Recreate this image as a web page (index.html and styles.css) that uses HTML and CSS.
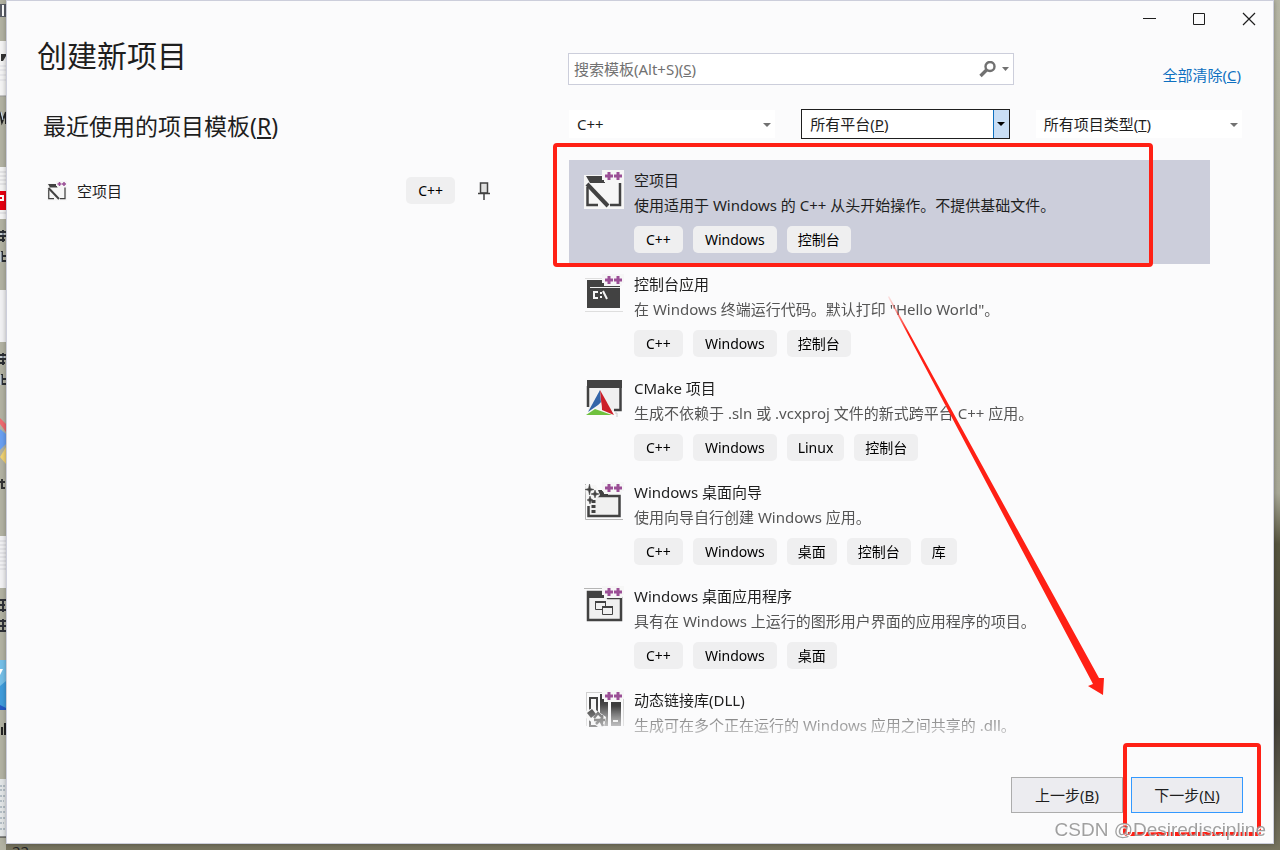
FILE: index.html
```html
<!DOCTYPE html>
<html lang="zh-CN">
<head>
<meta charset="utf-8">
<meta name="viewport" content="width=device-width, initial-scale=1">
<title>创建新项目</title>
<link rel="stylesheet" href="styles.css">
</head>
<body class="desktop">
<svg class="desktop-left" width="6" height="850" aria-hidden="true">
  <rect width="6" height="850" fill="#b2b2a2"/>
  <rect y="4" width="6" height="13" fill="#5a5d66"/><rect x="2" y="5" width="2" height="11" fill="#fff"/>
  <rect y="41" width="6" height="55" fill="#f4f4f4"/><path d="M1 61V54H6V56L3 61Z" fill="#333"/><path d="M0 66H6M0 70H6M0 75H6M0 80H6" stroke="#dcdce2"/>
  <path d="M0 96H6" stroke="#999"/>
  <path d="M0 112L2 122L6 112M6 124V112" stroke="#222" stroke-width="2" fill="none"/><path d="M1 112L3 120" stroke="#cfe6ff"/>
  <rect y="167" width="6" height="52" fill="#f4f4f4"/><path d="M0 172H6M0 176H6M0 180H6M0 184H6M0 213H6" stroke="#d4d4d8"/>
  <rect y="191" width="6" height="19" fill="#e60012"/><path d="M0 196H3V200H0" stroke="#fff" stroke-width="2" fill="none"/>
  <g id="caption" stroke="#2c2f33" stroke-width="2" fill="none"><path d="M0 232H6M0 236H6M0 240H5M3 230V242M2 251V262M6 256H3M6 261H3"/><path d="M0 234H5M1 252V262" stroke="#d9e9ff" stroke-width="1"/></g>
  <rect y="290" width="6" height="52" fill="#f1f1f3"/>
  <use href="#caption" y="123"/>
  <path d="M0 418L6 424V432L0 424Z" fill="#ef6a70"/><path d="M0 429L6 434V444L0 450Z" fill="#6a9ff0"/><path d="M0 457L6 447V464Z" fill="#f0d273"/>
  <path d="M2 479V488H5M0 482H5" stroke="#333" stroke-width="2" fill="none"/>
  <rect y="536" width="6" height="52" fill="#f1f1f3"/><path d="M0 541H6M0 545H6M0 549H6M0 553H6M0 557H6M0 561H6M0 565H6M0 569H6" stroke="#d5d5da"/>
  <path d="M0 600H6M0 605H5M0 610H6M0 621H6M0 626H6M0 631H6M3 600V612M3 619V631" stroke="#303238" stroke-width="2"/>
  <rect y="660" width="6" height="50" fill="#3f9bdb"/><path d="M0 660H6V681L0 686Z" fill="#75bfe8"/><path d="M0 669H3L0 675Z" fill="#fff"/><path d="M0 705L6 708V710H0Z" fill="#2459c3"/>
  <path d="M2 727V735M5 723V735" stroke="#222" stroke-width="2"/>
  <rect y="779" width="6" height="58" fill="#e3e6e7"/><path d="M0 786H6M0 790H5M0 796H6M0 801H4M0 807H6M0 812H5M0 818H6M0 823H4M0 829H6" stroke="#8596a3" stroke-dasharray="2 1"/><path d="M0 837H6" stroke="#333"/>
</svg>
<main class="window">
  <section class="recent">
    <h1 class="title">创建新项目</h1>
    <h2 class="subtitle">最近使用的项目模板(<u>R</u>)</h2>
    <div class="recent-item">
      <svg class="recent-icon" viewBox="0 0 40 40" aria-hidden="true"><use href="#icon-empty"/></svg>
      <span class="recent-name">空项目</span>
      <span class="tag latin">C++</span>
      <button class="pin" type="button" aria-label="固定"><svg width="12" height="18" viewBox="0 0 12 18"><path d="M2.5 1H9.5V11H2.5Z" fill="#e0e0e0" stroke="#424242" stroke-width="1.5"/><path d="M0 11.5H12M6 12V18" stroke="#424242" stroke-width="1.5"/></svg></button>
    </div>
  </section>

  <section class="browse">
    <div class="controls">
      <button class="control" type="button" aria-label="最小化"><svg width="14" height="14"><path d="M1 6.5H14" stroke="#1e1e1e"/></svg></button>
      <button class="control" type="button" aria-label="最大化"><svg width="14" height="14"><path d="M1.5 1.5H12.5V12.5H1.5Z" fill="none" stroke="#1e1e1e"/></svg></button>
      <button class="control" type="button" aria-label="关闭"><svg width="14" height="14"><path d="M1 1L13 13M13 1L1 13" stroke="#1e1e1e" stroke-width="1.2"/></svg></button>
    </div>

    <div class="search-row">
      <div class="search">
        <input class="search-input" id="search" type="text">
        <label class="hint" for="search">搜索模板(Alt+S)(<u>S</u>)</label>
        <button class="search-button" type="button" aria-label="搜索"><svg width="32" height="18" viewBox="0 0 32 18"><circle cx="12" cy="5.500" r="4.500" fill="none" stroke="#717171" stroke-width="2.400"/><path d="M9 8.500L2.500 15" stroke="#717171" stroke-width="3.400"/><path d="M24 6H31L27.500 10Z" fill="#717171"/></svg></button>
      </div>
      <a class="clear" href="#">全部清除(<u>C</u>)</a>
    </div>

    <div class="filters">
      <div class="filter">
        <select class="select" aria-label="语言"><option>C++</option></select>
        <svg class="arrow" width="8" height="4" aria-hidden="true"><path d="M0 0H8L4 4Z"/></svg>
      </div>
      <div class="filter filter-active">
        <select class="select" id="platform"><option></option></select>
        <label class="hint hint-filter" for="platform">所有平台(<u>P</u>)</label>
        <span class="drop"><svg width="8" height="4" aria-hidden="true"><path d="M0 0H8L4 4Z"/></svg></span>
      </div>
      <div class="filter">
        <select class="select" id="type"><option></option></select>
        <label class="hint hint-filter" for="type">所有项目类型(<u>T</u>)</label>
        <svg class="arrow" width="8" height="4" aria-hidden="true"><path d="M0 0H8L4 4Z"/></svg>
      </div>
    </div>

    <div class="results">
      <ul class="templates">
        <li class="template selected">
          <svg class="icon" viewBox="0 0 40 40" aria-hidden="true">
            <g id="icon-empty">
              <path d="M0 5H18V0H40V39H0Z" fill="#f6f6f6"/>
              <path d="M2 6H18V10H21V13H6Z" fill="#424242"/>
              <path d="M3.500 17V35H14M26 35H36V13" fill="none" stroke="#424242" stroke-width="2.500"/>
              <path d="M3 14L24 36" stroke="#424242" stroke-width="4"/>
              <g id="plus-plus"><path d="M18 0H40V9H38V12H20V9H18Z" fill="#f6f6f6"/><path d="M21 6H29M25 2V10M30 6H38M34 2V10" stroke="#9b4f96" stroke-width="3"/></g>
            </g>
          </svg>
          <div class="details">
            <h3 class="name">空项目</h3>
            <p class="description">使用适用于 Windows 的 C++ 从头开始操作。不提供基础文件。</p>
            <div class="tags"><span class="tag latin">C++</span><span class="tag latin">Windows</span><span class="tag">控制台</span></div>
          </div>
        </li>
        <li class="template">
          <svg class="icon" viewBox="0 0 40 40" aria-hidden="true">
            <path d="M1 4.500H18M1 37.500H39M39.500 4V7" stroke="#dedede"/>
            <path d="M3 6H36V34H3Z" fill="#424242"/><path d="M6 13.500H36" stroke="#f0f0f0"/>
            <path d="M14 18H10V24H14M17 18V20M17 22V24M19 17L23 25" fill="none" stroke="#f4f4f4" stroke-width="2"/>
            <use href="#plus-plus"/>
          </svg>
          <div class="details">
            <h3 class="name">控制台应用</h3>
            <p class="description">在 Windows 终端运行代码。默认打印 "Hello World"。</p>
            <div class="tags"><span class="tag latin">C++</span><span class="tag latin">Windows</span><span class="tag">控制台</span></div>
          </div>
        </li>
        <li class="template">
          <svg class="icon" viewBox="0 0 40 40" aria-hidden="true">
            <path d="M4 3H37V33H4Z" fill="#f0f0f0"/><path d="M3 2H38V10H3Z" fill="#424242"/>
            <path d="M4 8V29M36.500 8V32H30" fill="none" stroke="#424242" stroke-width="2.500"/>
            <path d="M15 12L3 37H30Z" fill="#f7f7f7"/>
            <path d="M16 12L17 25L4 34Z" fill="#3465a8"/><path d="M16 12L30 37L18 32Z" fill="#cc202a"/><path d="M2 37L11 31L28 37Z" fill="#6fc13e"/><path d="M17 24L12 30L18 32Z" fill="#f1f1f1"/>
            <path d="M31 35H33V39" fill="none" stroke="#c8c8c8"/>
          </svg>
          <div class="details">
            <h3 class="name">CMake 项目</h3>
            <p class="description">生成不依赖于 .sln 或 .vcxproj 文件的新式跨平台 C++ 应用。</p>
            <div class="tags"><span class="tag latin">C++</span><span class="tag latin">Windows</span><span class="tag">Linux</span><span class="tag">控制台</span></div>
          </div>
        </li>
        <li class="template">
          <svg class="icon" viewBox="0 0 40 40" aria-hidden="true">
            <path d="M1.500 2V37.500H39" fill="none" stroke="#b5b5b5"/>
            <path d="M4.500 19V34H35.500V14H12" fill="#f0f0f0" stroke="#424242" stroke-width="2.500"/>
            <path d="M13 8H18L20 11H24V14H13Z" fill="#424242"/>
            <path d="M1 3H12L16 13L6 24H3Z" fill="#f6f6f6"/>
            <path d="M5.500 2L6.500 6.500L10 7.500L6.500 8.500L5.500 13L4.500 8.500L1 7.500L4.500 6.500ZM11 8L12 11L15 12L12 13L11 16L10 13L7 12L10 11ZM6 14L7 17L9 18L7 19L6 22L5 19L3 18L5 17Z" fill="#424242" stroke="#424242" stroke-width=".5"/>
            <path d="M9.500 18V32" stroke="#424242" stroke-width="4" stroke-dasharray="3 2"/>
            <use href="#plus-plus"/>
          </svg>
          <div class="details">
            <h3 class="name">Windows 桌面向导</h3>
            <p class="description">使用向导自行创建 Windows 应用。</p>
            <div class="tags"><span class="tag latin">C++</span><span class="tag latin">Windows</span><span class="tag">桌面</span><span class="tag">控制台</span><span class="tag">库</span></div>
          </div>
        </li>
        <li class="template">
          <svg class="icon" viewBox="0 0 40 40" aria-hidden="true">
            <path d="M0 2.500H20" stroke="#b5b5b5"/>
            <path d="M4 6H20L24 12H37V34H4Z" fill="#f0f0f0" stroke="#424242" stroke-width="2.500"/><path d="M3 5H20V9L23 12H3Z" fill="#424242"/>
            <path d="M11.500 15.500H21.500V23.500H11.500Z" fill="#f0f0f0" stroke="#424242"/><path d="M11 16H22" stroke="#424242" stroke-width="2"/>
            <path d="M18.500 20.500H28.500V28.500H18.500Z" fill="#f0f0f0" stroke="#424242"/><path d="M18 21H29" stroke="#424242" stroke-width="2"/>
            <use href="#plus-plus"/>
          </svg>
          <div class="details">
            <h3 class="name">Windows 桌面应用程序</h3>
            <p class="description">具有在 Windows 上运行的图形用户界面的应用程序的项目。</p>
            <div class="tags"><span class="tag latin">C++</span><span class="tag latin">Windows</span><span class="tag">桌面</span></div>
          </div>
        </li>
        <li class="template template-last">
          <svg class="icon" viewBox="0 0 40 40" aria-hidden="true">
            <defs><linearGradient id="steel" x2="0" y2="1"><stop offset="0.200" stop-color="#3c3c3c"/><stop offset="1" stop-color="#8a8a8a"/></linearGradient></defs>
            <path d="M2.500 2V36M3 2.500H18M39.500 3V36" fill="none" stroke="#d0d0d0"/>
            <path d="M6 8H13V36H6Z" fill="#f6f6f6" stroke="#424242" stroke-width="2"/>
            <path d="M16 4H24V36H16Z" fill="url(#steel)"/>
            <path d="M27 12H37V36H27Z" fill="url(#steel)"/><path d="M29 31H34" stroke="#eee" stroke-width="2"/>
            <path d="M2 21L9 18L22 27L20 37H14L2 28Z" fill="#f6f6f6"/>
            <path d="M3 23L8 19L12 24L7 28Z" fill="#424242"/><path d="M10 28L14 23L19 28M10 30H21M18 25V33M12 34L16 30L19 36" fill="none" stroke="#606060" stroke-width="2.500"/>
            <use href="#plus-plus"/>
          </svg>
          <div class="details">
            <h3 class="name">动态链接库(DLL)</h3>
            <p class="description">生成可在多个正在运行的 Windows 应用之间共享的 .dll。</p>
          </div>
        </li>
      </ul>
    </div>

    <div class="actions">
      <button class="action" type="button">上一步(<u>B</u>)</button>
      <button class="action primary" type="button">下一步(<u>N</u>)</button>
    </div>
  </section>
</main>
<span class="desktop-label">22</span>
<svg class="markup" width="1280" height="850" aria-hidden="true">
  <defs><linearGradient id="trail" gradientUnits="userSpaceOnUse" x1="888" y1="296" x2="908" y2="333"><stop offset="0" stop-color="#ff2015" stop-opacity="0.100"/><stop offset="1" stop-color="#ff2015"/></linearGradient></defs>
  <rect x="555" y="145" width="596" height="120" rx="2" fill="none" stroke="#ff2015" stroke-width="4"/>
  <rect x="1125" y="745" width="134" height="89" rx="2" fill="none" stroke="#ff2015" stroke-width="4"/>
  <path d="M888 297L889 296L1099 678L1104 678L1103 695L1088 686L1093 684Z" fill="url(#trail)"/>
</svg>
<span class="watermark">CSDN @Desirediscipline</span>
</body>
</html>
```
FILE: styles.css
```css
* { box-sizing: border-box; }

.desktop {
  position: relative;
  min-height: 100vh;
  margin: 0;
  padding: 0 6px 6px;
  overflow: hidden;
  background: linear-gradient(#b7b7a5, #a9a998 58%, #57553f 64%, #45423a 85%, #77745f);
  color: #1e1e1e;
  font: 15px/20px "Noto Sans", "Noto Sans CJK SC", sans-serif;
}

button, input, select { color: inherit; font: inherit; }
button { padding: 0; border: 0; background: none; }
h1, h2, h3, p, ul { margin: 0; padding: 0; font-weight: 400; }

.desktop-left { position: absolute; top: 0; left: 0; }

.window {
  position: relative;
  display: grid;
  grid-template-columns: 561px minmax(0, 1fr);
  min-height: calc(100vh - 6px);
  border: 1px solid #cccedb;
  background: #fbfbfc;
  box-shadow: 0 0 5px rgba(0, 0, 0, 0.3);
}

.recent { padding: 31px 78px 0 30px; }
.title { font-size: 30px; line-height: 48px; }
.subtitle { margin-top: 28px; padding-left: 6px; font-size: 23px; line-height: 36px; }
.recent-item { display: flex; align-items: center; margin-top: 33px; padding-left: 10px; }
.recent-icon { width: 20px; height: 20px; margin-right: 10px; }
.recent-name { flex: 1; }
.pin { display: flex; margin-left: 23px; }

.browse { display: flex; flex-direction: column; padding-right: 30px; }

.controls { display: flex; justify-content: flex-end; margin-right: -31px; }
.control {
  display: flex;
  align-items: center;
  justify-content: center;
  width: 50px;
  height: 36px;
}

.search-row { display: flex; justify-content: space-between; margin-top: 16px; }
.search { position: relative; width: 446px; height: 32px; }
.search-input {
  width: 100%;
  height: 100%;
  padding: 0 48px 0 6px;
  border: 1px solid #cccedb;
  background: #fff;
}
.hint { position: absolute; top: 6px; left: 6px; color: #717171; pointer-events: none; }
.search-button { position: absolute; top: 8px; right: 4px; display: flex; }
.clear { margin: 12px 2px 0 0; color: #0e70c0; text-decoration: none; }

.filters {
  display: grid;
  grid-template-columns: repeat(3, minmax(0, 1fr));
  gap: 25px;
  margin-top: 24px;
}
.filter { position: relative; height: 30px; }
.select {
  display: block;
  width: 100%;
  height: 100%;
  padding: 0 24px 0 8px;
  border: 1px solid #fbfbfc;
  border-radius: 0;
  background: #fff;
  appearance: none;
}
.hint-filter { top: 5px; left: 9px; color: #1e1e1e; }
.arrow { position: absolute; top: 14px; right: 5px; fill: #717171; pointer-events: none; }
.filter-active .select { border-color: #1e1e1e; }
.drop {
  position: absolute;
  top: 1px;
  right: 1px;
  bottom: 1px;
  display: flex;
  align-items: center;
  justify-content: center;
  width: 16px;
  border-left: 1px solid #0e70c0;
  background: #c9def5;
  pointer-events: none;
}

.results {
  margin: 21px 33px 0 1px;
  mask-image: linear-gradient(#000 545px, transparent 590px);
}
.templates { list-style: none; }
.template { display: flex; gap: 10px; height: 104px; padding: 10px 0 0 15px; }
.template-last { height: auto; }
.selected { background: #cccedb; }
.icon { flex: none; width: 40px; height: 40px; }
.name { font-size: 15px; line-height: 20px; }
.description { margin-top: 5px; color: #555; white-space: nowrap; }
.selected .description { color: #1e1e1e; }
.tags { display: flex; gap: 10px; margin-top: 11px; }
.tag {
  padding: 4px 11px 3px;
  border-radius: 5px;
  background: #efeff0;
  color: #000;
  font-size: 14px;
  line-height: 20px;
}
.latin { padding-right: 12px; padding-left: 12px; }

.actions { display: flex; justify-content: flex-end; gap: 8px; margin: auto 0 30px; }
.action { width: 112px; height: 36px; border: 1px solid #acacac; background: #ececf0; }
.primary { border-color: #3399ff; }

.desktop-label {
  position: absolute;
  top: 844px;
  left: 12px;
  height: 6px;
  overflow: hidden;
  color: #222;
  line-height: 14px;
}
.markup { position: absolute; top: 0; left: 0; pointer-events: none; }
.watermark {
  position: absolute;
  right: 14px;
  bottom: 8px;
  color: rgba(150, 150, 150, 0.9);
  font: 19px/24px "Liberation Sans", Arial, sans-serif;
  text-shadow: 1px 1px 0 #fff;
}
```
